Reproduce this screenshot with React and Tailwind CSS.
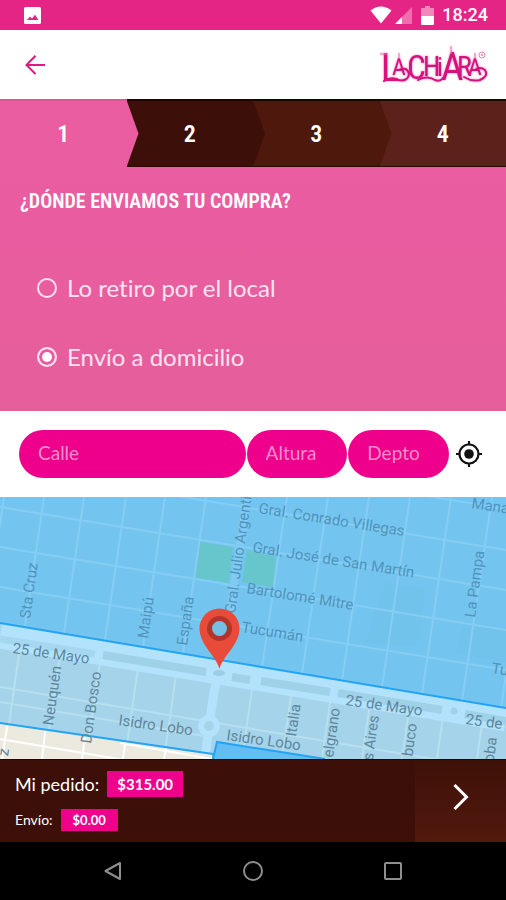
import { useState } from "react";

function StatusBar() {
  return (
    <div className="flex h-[30px] items-center justify-between bg-[#e42586] pl-6 pr-[18px] text-white">
      <svg className="size-[17px]" viewBox="0 0 17 17" aria-hidden="true">
        <rect width="17" height="17" rx="1.5" fill="#fff" />
        <path d="M3 13 L6 9.5 L8 11.5 L11 7.8 L14.5 13 Z" fill="#e42586" />
      </svg>
      <div className="flex items-center">
        <svg className="h-[18px] w-[22px]" viewBox="0 0 22 18" aria-hidden="true">
          <path d="M0.5 4.5 Q11 -3.5 21.5 4.5 L11 17.5 Z" fill="#fff" />
        </svg>
        <svg className="ml-[3px] size-[17px]" viewBox="0 0 17 17" aria-hidden="true">
          <path d="M17 0 V17 H0 Z" fill="#ee6fb0" />
          <path d="M7 10 V17 H0 Z" fill="#fff" />
        </svg>
        <svg className="ml-[9px] h-[19px] w-[13px]" viewBox="0 0 13 19" aria-hidden="true">
          <path d="M4 0 H9 V2 H13 V10 H0 V2 H4 Z" fill="#f088bd" />
          <path d="M0 10 H13 V18 Q13 19 12 19 H1 Q0 19 0 18 Z" fill="#fff" />
        </svg>
        <span className="ml-2 font-['Roboto',sans-serif] text-[18px] font-medium leading-[30px]">18:24</span>
      </div>
    </div>
  );
}

function Logo() {
  return (
    <svg className="h-[46px] w-[112px]" viewBox="0 0 112 46" role="img" aria-label="La Chiara">
      <g className="[filter:drop-shadow(0_0_1px_#f27fb8)]">
        <text fontFamily="'Roboto Condensed',Roboto,sans-serif" fill="#d8127d">
          <tspan x="3" y="39" fontSize="38">L</tspan>
          <tspan x="14" y="33" fontSize="24">A</tspan>
          <tspan x="29" y="37" fontSize="33">C</tspan>
          <tspan x="45" y="34" fontSize="28">H</tspan>
          <tspan x="59" y="34" fontSize="26">i</tspan>
          <tspan x="63" y="38" fontSize="39">A</tspan>
          <tspan x="79" y="34" fontSize="28">R</tspan>
          <tspan x="90" y="33" fontSize="24">A</tspan>
        </text>
        <g fill="none" stroke="#d8127d" strokeWidth="2" strokeLinecap="round">
          <path d="M6 39 Q14 34 20 38 Q30 40 31 32 Q29 24 21 28" />
          <path d="M40 38 Q49 33 57 38 Q62 40 65 36" />
          <path d="M86 35 Q94 40 102 38 Q111 34 107 28 Q102 24 97 28" />
        </g>
        <path d="M21 17 V11 M73 12 V4 M97 17 V11 M2 12 H9" stroke="#e87ab2" strokeWidth="1" />
      </g>
      <g fill="none" stroke="#e687b5" strokeWidth="1">
        <circle cx="104" cy="13" r="3" />
        <circle cx="104" cy="13" r="0.8" />
      </g>
    </svg>
  );
}

function Header() {
  return (
    <header className="flex h-[69px] items-center justify-between bg-white pl-[25px] pr-4">
      <button type="button" aria-label="Volver">
        <svg className="size-5" viewBox="0 0 20 20" fill="none" stroke="#dd1a80" strokeWidth="2" aria-hidden="true">
          <path d="M10.500 0.800 L1.500 10 L10.500 19 M1.500 10 H20" />
        </svg>
      </button>
      <Logo />
    </header>
  );
}

function Steps() {
  const arrow = "absolute -inset-y-px left-0 w-3 [clip-path:polygon(0_0,100%_50%,0_100%)]";
  const step = "relative flex flex-1 items-center justify-center border-t-2";
  const dark = " border-b border-t-[#1d0602] border-b-[#2a0803]";
  return (
    <ol className="flex h-[68px] bg-[#ea5da1] font-['Roboto_Condensed',Roboto,sans-serif] text-[24px] font-semibold text-white">
      <li className={step + " border-t-[#d95593]"}>1</li>
      <li className={step + dark + " bg-[#3c1008]"}>
        <span className={arrow + " bg-[#ea5da1]"} />2
      </li>
      <li className={step + dark + " bg-[#4f180c]"}>
        <span className={arrow + " bg-[#3c1008]"} />3
      </li>
      <li className={step + dark + " bg-[#5d211b]"}>
        <span className={arrow + " bg-[#4f180c]"} />4
      </li>
    </ol>
  );
}

function Option({ label, value, selected, onChange }) {
  return (
    <label className="flex items-center gap-[10px] font-['Lato',sans-serif] text-[24px] leading-7 text-[#ffe3f1] [font-variant-ligatures:none]">
      <input
        type="radio"
        name="entrega"
        value={value}
        checked={selected === value}
        onChange={() => onChange(value)}
        className="size-5 appearance-none rounded-full border-2 border-[#ffe3f1] checked:bg-white checked:shadow-[inset_0_0_0_3px_#ea5da1]"
      />
      {label}
    </label>
  );
}

function Address() {
  const field =
    "h-12 w-full min-w-0 rounded-full bg-[#ee008c] pb-[3px] pl-[19px] pr-3 font-['Lato',sans-serif] text-[19px] text-white outline-none placeholder:text-[#fb8dcb]";
  return (
    <div className="flex items-center bg-white py-[19px] pl-[19px] pr-[17px]">
      <div className="grid flex-1 grid-cols-[9fr_4fr_4fr] gap-px">
        <input aria-label="Calle" placeholder="Calle" className={field} />
        <input aria-label="Altura" placeholder="Altura" className={field} />
        <input aria-label="Depto" placeholder="Depto" className={field} />
      </div>
      <button type="button" aria-label="Usar mi ubicación" className="flex w-10 justify-center">
        <svg className="size-7" viewBox="0 0 28 28" fill="none" stroke="#111" strokeWidth="2.200" aria-hidden="true">
          <circle cx="14" cy="14" r="9.500" />
          <circle cx="14" cy="14" r="4.800" fill="#111" stroke="none" />
          <path d="M14 1 V5 M14 23 V27 M1 14 H5 M23 14 H27" />
        </svg>
      </button>
    </div>
  );
}

const northStreets = [4, 44, 84, 126, 165, 206, 247, 287, 328, 369, 410, 451, 492, 532];
const eastStreets = [-71, -30, 10, 50, 90];
const southStreets = [20, 61, 102, 141, 180, 258, 298, 338, 378, 418, 453, 493];

const labels = [
  { t: "Gral. Conrado Villegas", x: 258, y: 16, r: 9 },
  { t: "Gral. José de San Martín", x: 252, y: 55, r: 9 },
  { t: "Bartolomé Mitre", x: 246, y: 96, r: 9 },
  { t: "Tucumán", x: 241, y: 135, r: 9 },
  { t: "Mana", x: 471, y: 11, r: 9 },
  { t: "Tu", x: 491, y: 176, r: 9 },
  { t: "La Pampa", x: 475, y: 121, r: -82 },
  { t: "Sta Cruz", x: 30, y: 122, r: -82 },
  { t: "Maipú", x: 148, y: 142, r: -82 },
  { t: "España", x: 187, y: 149, r: -82 },
  { t: "Gral. Julio Argenti", x: 235, y: 117, r: -82 },
];

const southLabels = [
  { t: "25 de Mayo", x: 12, y: 156, r: 8 },
  { t: "25 de Mayo", x: 345, y: 208, r: 8 },
  { t: "25 de", x: 465, y: 227, r: 8 },
  { t: "Isidro Lobo", x: 118, y: 228, r: 8 },
  { t: "Isidro Lobo", x: 226, y: 243, r: 8 },
  { t: "Neuquén", x: 53, y: 229, r: -82 },
  { t: "Don Bosco", x: 91, y: 247, r: -82 },
  { t: "Italia", x: 296, y: 240, r: -82 },
  { t: "elgrano", x: 333, y: 261, r: -82 },
  { t: "s Aires", x: 379, y: 219, r: -82, a: "end" },
  { t: "buco", x: 417, y: 227, r: -82, a: "end" },
  { t: "oba", x: 497, y: 241, r: -82, a: "end" },
  { t: "z", x: 9, y: 252, r: -82, a: "end" },
];

function StreetLabel({ t, x, y, r, a }) {
  return (
    <text textAnchor={a} transform={`translate(${x} ${y}) rotate(${r})`}>
      {t}
    </text>
  );
}

function Map() {
  return (
    <div className="relative min-h-[262px] flex-1 overflow-hidden bg-[#73c5ef]">
      <svg
        className="absolute inset-0 size-full"
        viewBox="0 0 506 262"
        preserveAspectRatio="xMidYMid slice"
        role="img"
        aria-label="Mapa"
      >
        <defs>
          <clipPath id="north">
            <path d="M0 0 H506 V211 L0 126 Z" />
          </clipPath>
          <clipPath id="south">
            <path d="M0 126 L506 211 V262 H240 L0 226 Z" />
          </clipPath>
          <clipPath id="outside">
            <path d="M0 226 L212 257 V262 H0 Z" />
          </clipPath>
        </defs>

        <rect width="506" height="262" fill="#73c5ef" />
        <path d="M385 85 L425 92 L418 150 L365 145 Z M465 125 L506 130 V165 L455 157 Z" fill="#71c3eb" />
        <path d="M200 45 L233 50 L229 86 L194 80 Z M247 53 L276 60 L273 90 L242 85 Z" fill="#66c6cb" />
        <g clipPath="url(#north)" stroke="#86cdf4" strokeWidth="2" fill="none">
          {northStreets.map((x) => (
            <path key={x} d={`M${x} 0 L${x - 31} 211`} />
          ))}
          {eastStreets.map((y) => (
            <path key={y} d={`M0 ${y} L506 ${y + 83}`} />
          ))}
          <path d="M247 0 L222 170" stroke="#80caf3" strokeWidth="8" />
        </g>

        <path d="M0 126 L506 211 V262 H240 L0 226 Z" fill="#a5d3e9" />
        <g clipPath="url(#south)" stroke="#b6dff0" strokeWidth="2" fill="none">
          {southStreets.map((x) => (
            <path key={x} d={`M${x} 150 L${x - 16} 262`} />
          ))}
          <path d="M0 190 L506 274 M0 205 L210 240" />
          <path d="M0 139 L506 222" stroke="#b2e2fc" strokeWidth="25" />
          <path d="M0 142 L95 157" stroke="#a6d7f0" strokeWidth="7" />
          <path d="M103 158 L206 175 M232 180 L250 183 M261 184 L330 195 M338 196 L442 213 M465 217 L506 224" stroke="#9fd1e8" strokeWidth="8" />
          <path d="M219 175 L214 195 L209 228 L205 262" stroke="#b2e2fc" strokeWidth="9" />
          <circle cx="209" cy="229" r="8" stroke="#b2e2fc" strokeWidth="6" fill="#a5d3e9" />
          <circle cx="454" cy="214" r="5" stroke="#b2e2fc" strokeWidth="3" fill="#9fd1e8" />
        </g>
        <ellipse cx="219" cy="176" rx="6" ry="3" fill="#9ccde6" />

        <path d="M0 226 L212 257 V262 H0 Z" fill="#ece9df" />
        <g clipPath="url(#outside)" stroke="#fff" strokeWidth="2">
          <path d="M8 224 L2 262 M46 228 L42 262 M86 232 L82 262 M126 240 L123 262 M167 246 L164 262 M0 242 L130 264 M120 246 L212 262" />
        </g>

        <path d="M212 262 L217 245 L325 262 Z" fill="#62bdf2" />
        <g fill="none" stroke="#22a3f5" strokeWidth="2">
          <path d="M0 126 L506 211" />
          <path d="M0 226 L213 257" />
          <path d="M213 262 L217 245 L325 262" />
        </g>

        <g className="font-['Roboto',sans-serif] text-[15px]" fill="#5094bc">
          {labels.map((l) => (
            <StreetLabel key={l.t + l.x} {...l} />
          ))}
        </g>
        <g className="font-['Roboto',sans-serif] text-[15px]" fill="#5f879c">
          {southLabels.map((l) => (
            <StreetLabel key={l.t + l.x} {...l} />
          ))}
        </g>

        <path
          d="M219.500 172 C217 160 199.500 148 199.500 131.500 A20 20 0 0 1 239.500 131.500 C239.500 148 222 160 219.500 172 Z"
          fill="#e94b3b"
        />
        <circle cx="219.500" cy="131.500" r="10" fill="#74bfe4" stroke="#b2352b" strokeWidth="5" />
      </svg>
    </div>
  );
}

function Order() {
  return (
    <div className="flex h-[83px] border-t border-[#220502] bg-[#3c1008] font-['Lato',sans-serif] text-white">
      <dl className="flex flex-1 flex-col justify-center gap-3 pl-[15px]">
        <div className="flex items-center gap-2">
          <dt className="text-[18px] leading-[26px]">Mi pedido:</dt>
          <dd className="bg-[#ee008c] px-[10px] text-[15px] font-bold leading-[26px]">$315.00</dd>
        </div>
        <div className="flex items-center gap-2">
          <dt className="text-[14px] leading-[22px]">Envío:</dt>
          <dd className="bg-[#ee008c] px-3 text-[13px] font-bold leading-[22px]">$0.00</dd>
        </div>
      </dl>
      <button
        type="button"
        aria-label="Continuar"
        className="flex w-[91px] items-center justify-center bg-linear-to-b from-[#3e1108] to-[#52190e] pb-2"
      >
        <svg className="h-[26px] w-4" viewBox="0 0 16 26" fill="none" stroke="#fff" strokeWidth="3" aria-hidden="true">
          <path d="M1.500 1 L13.500 13 L1.500 25" />
        </svg>
      </button>
    </div>
  );
}

function SystemNav() {
  const icon = "size-5";
  return (
    <nav className="grid h-[58px] grid-cols-3 place-items-center bg-black px-[43px]">
      <button type="button" aria-label="Atrás">
        <svg className={icon} viewBox="0 0 20 20" fill="none" stroke="#8f8f8f" strokeWidth="2">
          <path d="M17 2 V18 L2.500 10 Z" strokeLinejoin="round" />
        </svg>
      </button>
      <button type="button" aria-label="Inicio">
        <svg className={icon} viewBox="0 0 20 20" fill="none" stroke="#8f8f8f" strokeWidth="2">
          <circle cx="10" cy="10" r="9" />
        </svg>
      </button>
      <button type="button" aria-label="Recientes">
        <svg className={icon} viewBox="0 0 20 20" fill="none" stroke="#8f8f8f" strokeWidth="2">
          <rect x="2" y="2" width="16" height="16" rx="1" />
        </svg>
      </button>
    </nav>
  );
}

export default function App() {
  const [delivery, setDelivery] = useState("domicilio");
  return (
    <div className="flex min-h-screen flex-col bg-white">
      <StatusBar />
      <Header />
      <main className="flex flex-1 flex-col">
        <Steps />
        <section className="bg-linear-to-b from-[#ea5da1] to-[#e65e9b] pb-10 pt-[18px]">
          <h1 className="pl-5 font-['Roboto_Condensed',Roboto,sans-serif] text-[20px] font-semibold leading-8 text-white">
            ¿DÓNDE ENVIAMOS TU COMPRA?
          </h1>
          <fieldset aria-label="Forma de entrega" className="flex flex-col gap-[41px] pl-[37px] pt-[57px]">
            <Option label="Lo retiro por el local" value="local" selected={delivery} onChange={setDelivery} />
            <Option label="Envío a domicilio" value="domicilio" selected={delivery} onChange={setDelivery} />
          </fieldset>
        </section>
        <Address />
        <Map />
      </main>
      <Order />
      <SystemNav />
    </div>
  );
}
